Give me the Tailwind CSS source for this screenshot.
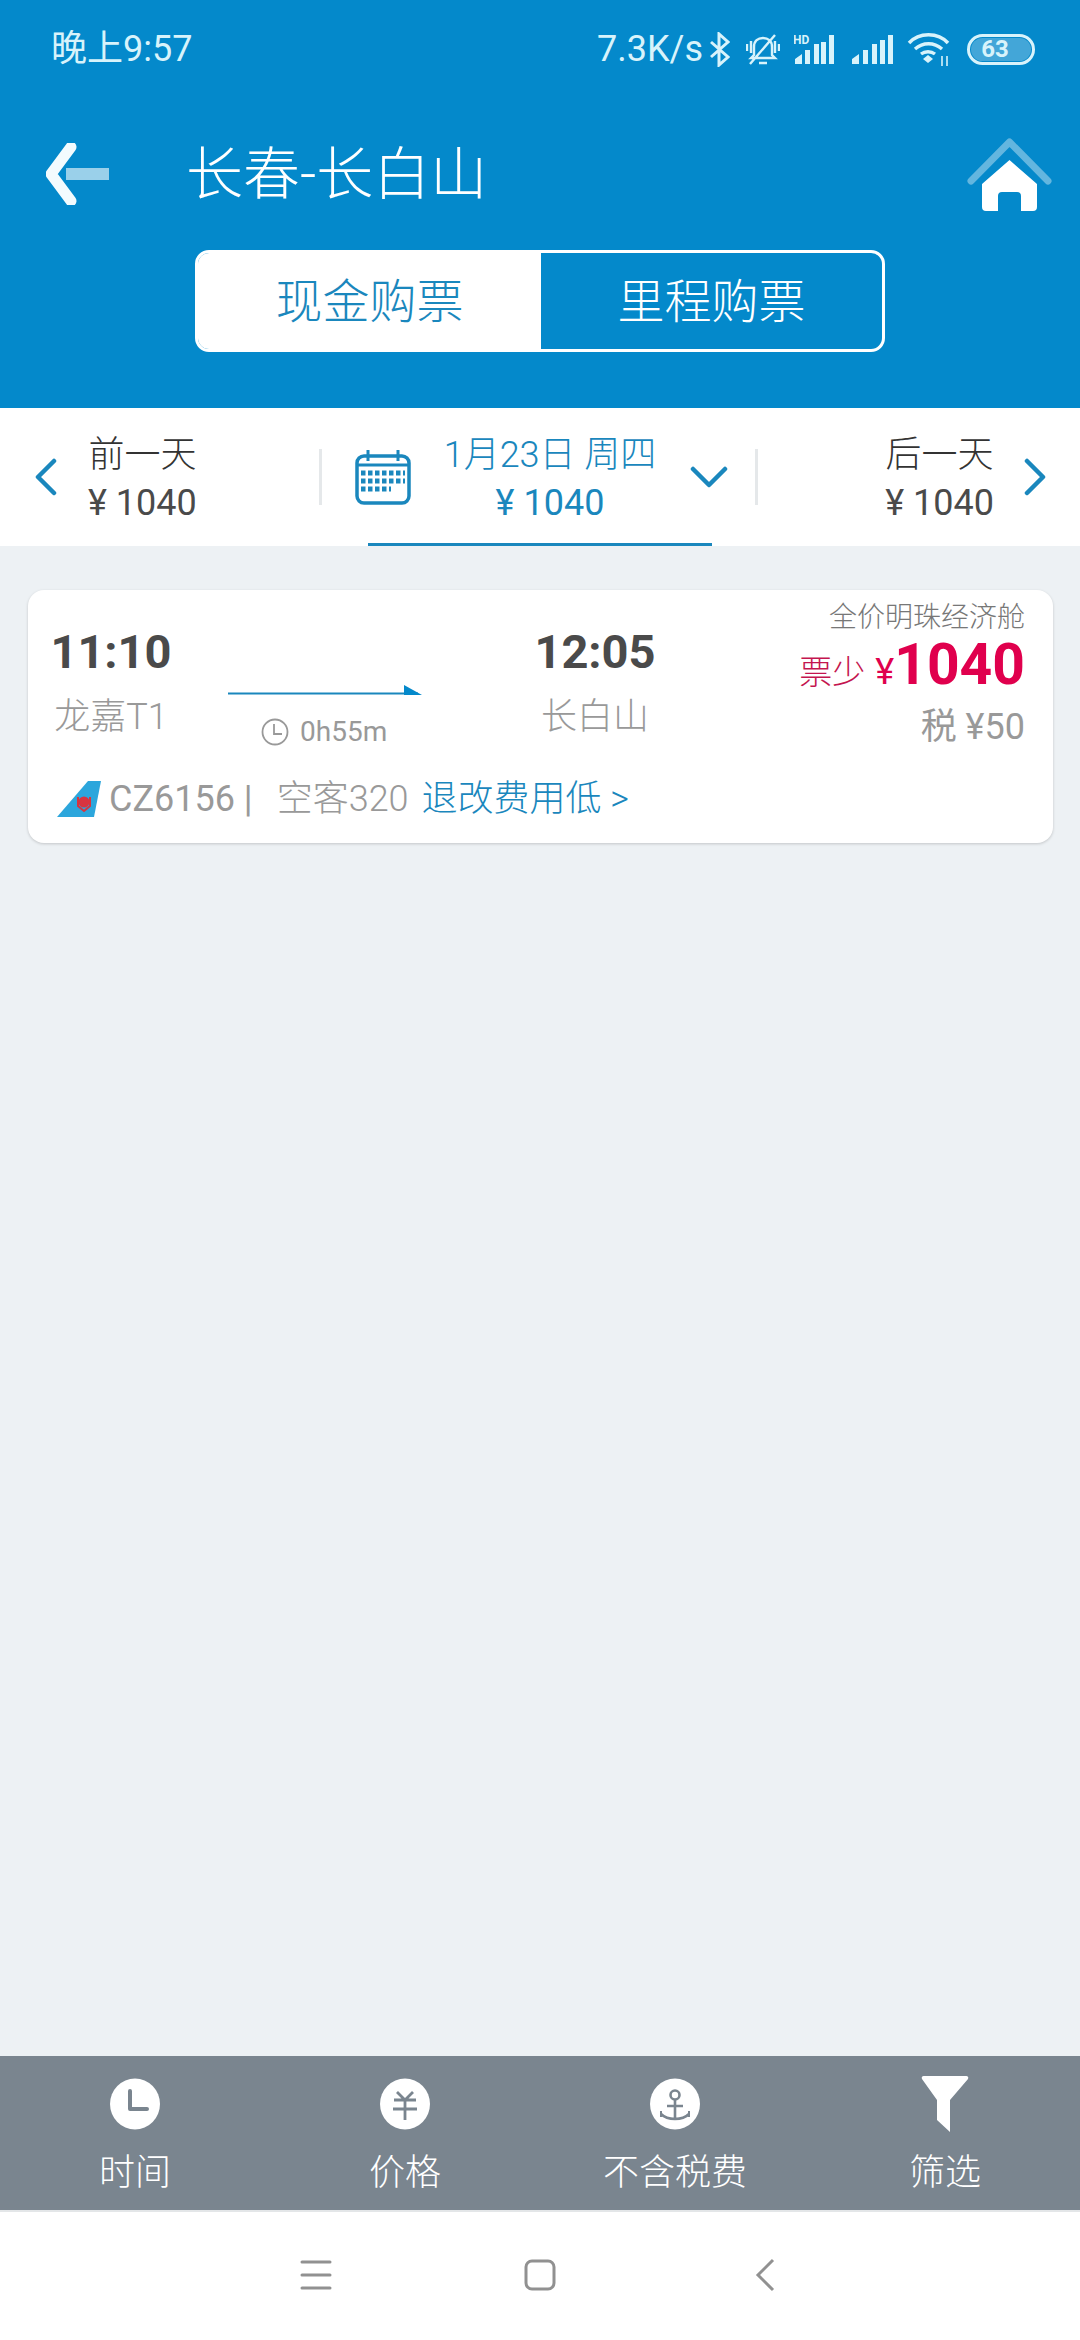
<!doctype html>
<html lang="zh">
<head>
<meta charset="utf-8">
<script src="https://cdn.jsdelivr.net/npm/@tailwindcss/browser@4"></script>
</head>
<body class="m-0">
<div class="w-[1080px] h-[2340px] flex flex-col overflow-hidden bg-[#edf1f4] font-['Roboto','Noto_Sans_CJK_SC',sans-serif]">

  <!-- blue header -->
  <header class="h-[408px] bg-[#0489cb] flex flex-col shrink-0">
    <div class="h-[98px] flex items-center pl-[51px] pr-[45px] text-[#d8f3fb]">
      <span class="text-[36px] leading-none">晚上9:57</span>
      <div class="ml-auto flex items-center">
        <span class="text-[36px] leading-none">7.3K/s</span>
        <svg class="ml-[6px]" width="21" height="35" viewBox="0 0 21 35" fill="none" stroke="#d8f3fb" stroke-width="3"><path d="M2 10 19 25 10 33V2l9 8L2 25"/></svg>
        <svg class="ml-[16px]" width="34" height="33" viewBox="0 0 34 33" fill="none" stroke="#d8f3fb" stroke-width="2.400"><path d="M8 22V14c0-6 4-9 9-9s9 3 9 9v8l3 3H5zM13 30h8M1 11v7M33 11v7M5 8v12M29 8v12M4 31 29 2"/></svg>
        <svg class="ml-[14px]" width="42" height="32" viewBox="0 0 42 32" fill="#d8f3fb"><path d="M1 31v-5l7-5v10zM11 31V17h5v14zM20 31V11h5v20zM27 31V9h5v22zM35 31V2h5v29z"/><text x="-1" y="11" font-size="12" font-weight="700" font-family="Roboto">HD</text></svg>
        <svg class="ml-[16px]" width="41" height="32" viewBox="0 0 41 32" fill="#d8f3fb"><path d="M0 31v-5l7-5v10zM11 31V17h5v14zM20 31V11h5v20zM28 31V7h5v24zM36 31V2h5v29z"/></svg>
        <svg class="ml-[14px]" width="44" height="36" viewBox="0 0 44 36" fill="none" stroke="#d8f3fb" stroke-width="3.400"><path d="M2 12C12 1 31 1 41 12M8 18c8-7 19-7 27 0M14 23c4-3 10-3 14 0"/><path d="M21 24l5 4-5 4-5-4z" fill="#d8f3fb" stroke="none"/><path d="M35 25v10M40 25v10" stroke-width="1.600"/></svg>
        <div class="ml-[16px] relative w-[68px] h-[31px] rounded-full border-[3px] border-[#d8f3fb] flex items-center justify-center">
          <div class="absolute left-[1px] top-[1px] bottom-[1px] w-[60px] rounded-full bg-white/25"></div>
          <span class="relative text-[24px] font-bold leading-none -ml-[12px] text-[#d8f3fb]">63</span>
        </div>
      </div>
    </div>

    <div class="h-[152px] flex items-center pl-[46px] pr-[28px]">
      <svg width="64" height="62" viewBox="0 0 64 62" fill="none">
        <rect x="20" y="25" width="43" height="12" fill="#fff" fill-opacity=".6"/>
        <path d="M25 4 5 31l20 27" stroke="#f3fbfe" stroke-width="11" stroke-linecap="round" stroke-linejoin="round"/>
      </svg>
      <h1 class="ml-[76px] text-[57px] leading-none font-light text-white">长春-长白山</h1>
      <svg class="ml-auto" width="85" height="76" viewBox="0 0 85 76">
        <path d="M4 45 42.500 6 81 45" fill="none" stroke="#fff" stroke-opacity=".38" stroke-width="7" stroke-linecap="round" stroke-linejoin="round"/>
        <path d="M42.500 24 15 48v23a4 4 0 0 0 4 4h12V60a4 4 0 0 1 4-4h15a4 4 0 0 1 4 4v15h12a4 4 0 0 0 4-4V48z" fill="#fff"/>
      </svg>
    </div>

    <div class="mx-auto flex w-[690px] h-[102px] rounded-[14px] border-[3px] border-white overflow-hidden">
      <div class="w-[343px] bg-white text-[#1a87bd] flex items-center justify-center text-[47px] leading-none font-light">现金购票</div>
      <div class="flex-1 text-white flex items-center justify-center text-[47px] leading-none font-light">里程购票</div>
    </div>
  </header>

  <!-- date bar -->
  <nav class="h-[138px] bg-white flex items-stretch shrink-0 relative">
    <div class="w-[319px] pl-[35px] flex items-center">
      <svg width="22" height="38" viewBox="0 0 22 38" fill="none" stroke="#1a87bd" stroke-width="4.500" stroke-linecap="round" stroke-linejoin="round"><path d="M19 3 3 19l16 16"/></svg>
      <div class="ml-[31px] text-center pt-[4px]">
        <div class="text-[36px] leading-[48px] text-[#333] font-light">前一天</div>
        <div class="text-[36px] leading-[48px] text-[#4a4a4a]">¥ 1040</div>
      </div>
    </div>
    <div class="w-[3px] h-[56px] mt-[41px] bg-[#e5e8ea]"></div>
    <div class="flex-1 flex items-center relative">
      <svg class="ml-[33px]" width="56" height="56" viewBox="0 0 56 56" fill="none">
        <rect x="2" y="7" width="52" height="47" rx="7" stroke="#1a87bd" stroke-width="3.500"/>
        <path d="M2 16h52" stroke="#1a87bd" stroke-width="3"/>
        <path d="M13 1v11M43 1v11" stroke="#1a87bd" stroke-width="3"/>
        <path d="M6 24h44M6 32h44M6 40h30" stroke="#1a87bd" stroke-width="5" stroke-dasharray="4.500 2.500"/>
      </svg>
      <div class="ml-[32px] text-center text-[#1a87bd] w-[214px] pt-[4px]">
        <div class="text-[36px] leading-[48px] whitespace-nowrap font-light">1月23日 周四</div>
        <div class="text-[36px] leading-[48px]">¥ 1040</div>
      </div>
      <svg class="ml-[33px]" width="38" height="24" viewBox="0 0 38 24" fill="none" stroke="#1a87bd" stroke-width="4.500" stroke-linecap="round" stroke-linejoin="round"><path d="M3 4l16 16L35 4"/></svg>
      <div class="absolute left-[46px] bottom-0 w-[344px] h-[3px] bg-[#1a87bd]"></div>
    </div>
    <div class="w-[3px] h-[56px] mt-[41px] bg-[#e5e8ea]"></div>
    <div class="w-[322px] pr-[34px] flex items-center justify-end">
      <div class="text-center pt-[4px]">
        <div class="text-[36px] leading-[48px] text-[#333] font-light">后一天</div>
        <div class="text-[36px] leading-[48px] text-[#4a4a4a]">¥ 1040</div>
      </div>
      <svg class="ml-[30px]" width="22" height="38" viewBox="0 0 22 38" fill="none" stroke="#1a87bd" stroke-width="4.500" stroke-linecap="round" stroke-linejoin="round"><path d="M3 3l16 16L3 35"/></svg>
    </div>
  </nav>

  <!-- list -->
  <main class="flex-1 px-[28px] pt-[44px]">
    <article class="h-[253px] w-[1025px] bg-white rounded-[16px] shadow-[0_1px_3px_rgba(0,0,0,0.18)] flex flex-col">
      <div class="h-[176px] flex">
        <div class="w-[166px] pt-[32px] text-center">
          <div class="h-[60px] leading-[60px] text-[47px] font-bold text-[#4a4a4a]">11:10</div>
          <div class="mt-[5px] h-[60px] leading-[60px] text-[36px] text-[#999] font-light">龙嘉T1</div>
        </div>
        <div class="ml-[34px] w-[192px] pt-[91px]">
          <svg class="block" width="194" height="14" viewBox="0 0 194 14"><path d="M0 12.500h190" stroke="#1a87bd" stroke-width="2"/><path d="M176 4l18 10h-18z" fill="#0489cb"/></svg>
          <div class="mt-[23px] ml-[33px] flex items-center text-[#999]">
            <svg width="28" height="28" viewBox="0 0 28 28" fill="none" stroke="#999" stroke-width="1.800"><circle cx="14" cy="14" r="12.500"/><path d="M13 6v10h8"/></svg>
            <span class="ml-[11px] text-[28px] leading-none">0h55m</span>
          </div>
        </div>
        <div class="ml-[97px] w-[156px] pt-[32px] text-center">
          <div class="h-[60px] leading-[60px] text-[47px] font-bold text-[#4a4a4a]">12:05</div>
          <div class="mt-[5px] h-[60px] leading-[60px] text-[36px] text-[#999] font-light">长白山</div>
        </div>
        <div class="flex-1 pr-[28px] pt-[8px] flex flex-col items-end">
          <div class="h-[40px] leading-[40px] text-[28px] text-[#777] font-light">全价明珠经济舱</div>
          <div class="h-[54px] flex items-baseline text-[#e0004d] leading-[54px]">
            <span class="text-[33px] text-[#c4154f] font-light">票少</span>
            <span class="ml-[10px] text-[36px]">¥</span>
            <span class="text-[57px] font-bold">1040</span>
          </div>
          <div class="mt-[10px] h-[50px] leading-[50px] text-[36px] text-[#999]">税 ¥50</div>
        </div>
      </div>
      <div class="h-[64px] flex items-center pl-[29px] text-[36px] leading-none whitespace-nowrap pt-[2px]">
        <svg width="44" height="36" viewBox="0 0 44 36">
          <path d="M0 36 31 0h13l-7 36z" fill="#2ca6dc"/>
          <circle cx="27" cy="21" r="5.500" fill="#d8343f"/>
          <path d="M21 16v9l6 5 6-5v-9" fill="none" stroke="#d8343f" stroke-width="2"/>
        </svg>
        <span class="ml-[8px] text-[#999]">CZ6156 |</span>
        <span class="ml-[24px] text-[#999] font-light">空客320</span>
        <span class="ml-[13px] text-[#1a87bd] font-light">退改费用低 &gt;</span>
      </div>
    </article>
  </main>

  <!-- bottom tabs -->
  <div class="h-[154px] bg-[#7a858f] grid grid-cols-4 shrink-0 text-white">
    <div class="flex flex-col items-center pt-[22px]">
      <svg width="50" height="52" viewBox="0 0 50 52"><ellipse cx="25" cy="26" rx="25" ry="25.500" fill="#fff"/><path d="M20 13v18h17" fill="none" stroke="#7a858f" stroke-width="4" stroke-linecap="round" stroke-linejoin="round"/></svg>
      <div class="mt-[18px] text-[36px] leading-[50px] font-light">时间</div>
    </div>
    <div class="flex flex-col items-center pt-[22px]">
      <svg width="50" height="52" viewBox="0 0 50 52" fill="none"><ellipse cx="25" cy="26" rx="25" ry="25.500" fill="#fff"/><path d="M17 14l8 8 8-8M14 22h22M13 31h24M25 22v20" stroke="#7a858f" stroke-width="2.800"/></svg>
      <div class="mt-[18px] text-[36px] leading-[50px] font-light">价格</div>
    </div>
    <div class="flex flex-col items-center pt-[22px]">
      <svg width="50" height="52" viewBox="0 0 50 52" fill="none"><ellipse cx="25" cy="26" rx="25" ry="25.500" fill="#fff"/><g stroke="#7a858f" stroke-width="2.600"><circle cx="25" cy="17" r="4.500"/><path d="M25 21.500V41M17 28h16M11 36c4 4 10 5 14 5s10-1 14-5"/><path d="M11 33v6M39 33v6" stroke-width="2"/></g></svg>
      <div class="mt-[18px] text-[36px] leading-[50px] font-light">不含税费</div>
    </div>
    <div class="flex flex-col items-center pt-[19px]">
      <svg width="48" height="57" viewBox="0 0 48 57"><path d="M3 1h42a2 2 0 0 1 2 3L29 25v32l-13-12V25L1 4a2 2 0 0 1 2-3z" fill="#fff"/></svg>
      <div class="mt-[16px] text-[36px] leading-[50px] font-light">筛选</div>
    </div>
  </div>

  <!-- system nav -->
  <div class="h-[130px] bg-white border-t-[2px] border-[#e3e6e8] flex items-center justify-center shrink-0 pb-[2px]">
    <svg width="32" height="30" viewBox="0 0 32 30" fill="none" stroke="#919191" stroke-width="3" stroke-linecap="round"><path d="M2 2h28M2 15h28M2 28h28"/></svg>
    <svg class="ml-[192px]" width="32" height="32" viewBox="0 0 32 32" fill="none"><rect x="2" y="2" width="28" height="28" rx="6" stroke="#919191" stroke-width="3"/></svg>
    <svg class="ml-[199px]" width="22" height="34" viewBox="0 0 22 34" fill="none" stroke="#919191" stroke-width="3"><path d="M18 2 3 17l15 15"/></svg>
    <div class="w-[4px]"></div>
  </div>
</div>
</body>
</html>
